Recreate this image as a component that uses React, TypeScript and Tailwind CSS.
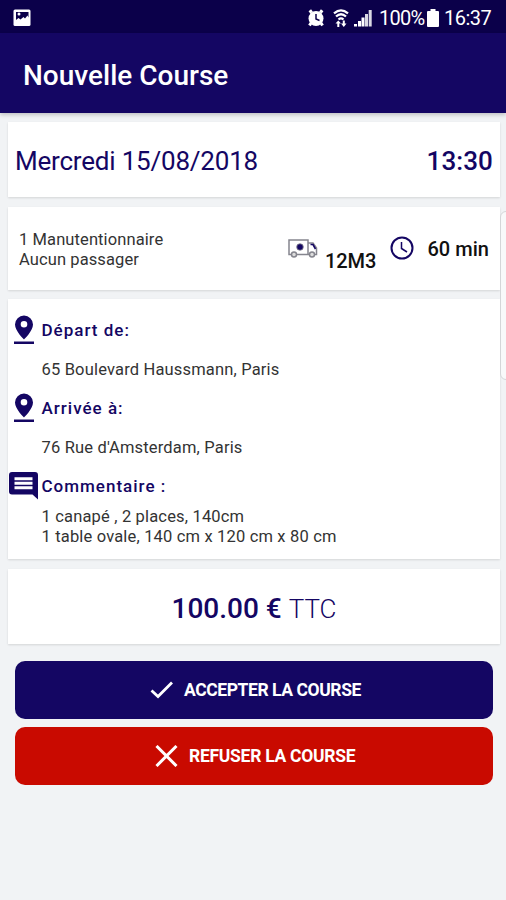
import React from 'react';

const NAVY = '#140663';

function StatusBar() {
  return (
    <div className="flex h-[33px] items-center bg-[#0b004a] pt-[3px] pl-[13px] text-white">
      <svg className="h-[18px] w-[18px]" viewBox="0 0 18 18">
        <rect x="0.5" y="0.5" width="17" height="16.5" rx="1.5" fill="#fff" />
        <path d="M3 3h12.500v5.500l-1-2-2.500 3-1.500-1.500-3 2.500-2-1.500-2.500 2z" fill="#0b004a" />
        <circle cx="6" cy="5" r="1.500" fill="#fff" />
      </svg>
      <svg className="ml-[276px] h-[18px] w-[18px]" viewBox="0 0 18 18">
        <path d="M2.500 3.500 5 1.500M15.500 3.500 13 1.500M4 14l-1.500 2.500M14 14l1.500 2.500" stroke="#fff" strokeWidth="3" />
        <circle cx="9" cy="9.500" r="7.500" fill="#fff" />
        <path d="M9 5v5l3.500 1.500" stroke="#0b004a" strokeWidth="1.500" fill="none" />
      </svg>
      <svg className="ml-[8px] h-[19px] w-[16px]" viewBox="0 0 16 19" fill="none" stroke="#fff" strokeWidth="2.300">
        <path d="M1 4.300Q8-1.500 15 4.300M3 7.500Q8 3 13 7.500M5.500 10.500Q8 8.300 10.500 10.500" />
        <path d="M2.500 14.500h5.500L5.300 11.500zM8 14.500h5.500l-2.700 3.500z" fill="#fff" stroke="none" />
        <path d="M5.300 13v5M10.800 11.500v4" strokeWidth="2" />
      </svg>
      <svg className="ml-[5px] h-[18px] w-[18px]" viewBox="0 0 18 18" fill="#fff">
        <path d="M0 15h3v2.500H0zM4 12h3v5.500H4zM7.500 8.500h3v9h-3z" />
        <path d="M11 5h3v12.500h-3zM14.700 1h3v16.500h-3z" opacity="0.85" />
      </svg>
      <span className="ml-[7px] w-[45px] text-[20px] leading-[20px] tracking-[-0.7px] whitespace-nowrap">100%</span>
      <svg className="ml-[3px] h-[18px] w-[12px]" viewBox="0 0 12 18" fill="#fff">
        <path d="M3.500 0h5v2H11q1 0 1 1v14q0 1-1 1H1q-1 0-1-1V3q0-1 1-1h2.500z" />
      </svg>
      <span className="ml-[5px] text-[20px] leading-[20px] tracking-[-0.5px]">16:37</span>
    </div>
  );
}

function PinIcon() {
  return (
    <svg className="ml-[6px] h-[30px] w-[20px] shrink-0" viewBox="0 0 20 30" fill={NAVY}>
      <path fillRule="evenodd" d="M10 0.500a9 9 0 0 1 9 9c0 6.500-9 15-9 15S1 16 1 9.500a9 9 0 0 1 9-9zm0 5.500a3.300 3.300 0 1 0 0 6.600 3.300 3.300 0 0 0 0-6.600z" />
      <path d="M0 26.500h20v2.500H0z" />
    </svg>
  );
}

function CommentIcon() {
  return (
    <svg className="ml-[1px] h-[28px] w-[29px] shrink-0" viewBox="0 0 29 28">
      <path d="M3 0h23q3 0 3 3v24.500l-5.500-5H3q-3 0-3-3V3q0-3 3-3z" fill={NAVY} />
      <path d="M5.500 6.800h18M5.500 11.300h18M5.500 15.800h18" stroke="#fff" strokeWidth="3" />
    </svg>
  );
}

function TruckIcon() {
  return (
    <svg className="h-[19px] w-[30px]" viewBox="0 0 30 19" fill="none" stroke="#85858e" strokeWidth="1.500">
      <path d="M3 15.500H1V1h19v14.500H9M20 4h5l3.500 5v6.500h-2M20 15.500h1" />
      <path d="M22.500 5.500h2.500l2.500 4.500" stroke={NAVY} strokeWidth="1.600" />
      <circle cx="6" cy="15.500" r="2.500" fill="#ddd" />
      <circle cx="24" cy="15.500" r="2.500" fill="#ddd" />
      <circle cx="12" cy="8" r="3.300" fill={NAVY} stroke="#85858e" strokeWidth="0.800" />
    </svg>
  );
}

function ClockIcon() {
  return (
    <svg className="h-[24px] w-[24px]" viewBox="0 0 24 24" fill="none" stroke={NAVY} strokeWidth="2">
      <circle cx="12" cy="12" r="10.500" />
      <path d="M11.500 6v6.500l5.500 3.500" strokeWidth="1.500" />
    </svg>
  );
}

interface StopProps {
  label: string;
  address: string;
}

function Stop({ label, address }: StopProps) {
  return (
    <div className="h-[78px]">
      <div className="flex h-[30px] items-center">
        <PinIcon />
        <h2 className="ml-[7.500px] text-[17px] leading-[20px] font-medium tracking-[1px] text-[#140663]">{label}</h2>
      </div>
      <p className="mt-[15px] ml-[33.500px] text-[16.500px] leading-[20px] tracking-[0.170px]">{address}</p>
    </div>
  );
}

export default function App() {
  return (
    <div className="relative h-[900px] w-[506px] overflow-hidden bg-[#f1f3f5] font-['Roboto',sans-serif] text-[#333333]">
      <StatusBar />
      <header className="flex h-[80px] items-center bg-[#140663] pt-[5px] pl-[23px] shadow-[0_2px_4px_rgba(0,0,0,0.2)]">
        <h1 className="text-[28px] leading-[34px] font-medium text-white">Nouvelle Course</h1>
      </header>

      <main className="mt-[9px] mr-[6px] ml-[8px] flex flex-col gap-[10px] whitespace-nowrap">
        <section className="flex h-[75px] items-center justify-between bg-white pt-[2px] pr-[7px] pl-[7px] text-[26px] leading-[32px] text-[#140663] shadow-[0_1px_2px_rgba(0,0,0,0.12)]">
          <span className="tracking-[-0.2px]">Mercredi 15/08/2018</span>
          <span className="font-medium tracking-[0.1px]">13:30</span>
        </section>

        <section className="flex h-[83px] bg-white shadow-[0_1px_2px_rgba(0,0,0,0.12)]">
          <div className="mt-[23px] ml-[11px] w-[269px] text-[16.500px] leading-[20px] tracking-[0.1px]">
            <p>1 Manutentionnaire</p>
            <p>Aucun passager</p>
          </div>
          <div className="mt-[32px] w-[30px]"><TruckIcon /></div>
          <span className="mt-[42px] ml-[7px] w-[64.500px] text-[20px] leading-[24px] font-medium tracking-[-0.1px] text-[#111111]">12M3</span>
          <div className="mt-[29px] w-[24px]"><ClockIcon /></div>
          <span className="mt-[30px] ml-[14px] text-[20px] leading-[24px] font-medium text-[#111111]">60 min</span>
        </section>

        <section className="-mt-px h-[260px] bg-white pt-[16px] shadow-[0_1px_2px_rgba(0,0,0,0.12)]">
          <Stop label="Départ de:" address="65 Boulevard Haussmann, Paris" />
          <Stop label="Arrivée à:" address="76 Rue d'Amsterdam, Paris" />
          <div className="flex h-[30px] items-center">
            <CommentIcon />
            <h2 className="ml-[3.500px] text-[17px] leading-[20px] font-medium tracking-[1px] text-[#140663]">Commentaire :</h2>
          </div>
          <div className="mt-[5.500px] ml-[33.500px] text-[16.500px] leading-[20px] tracking-[0.170px]">
            <p>1 canapé , 2 places, 140cm</p>
            <p>1 table ovale, 140 cm x 120 cm x 80 cm</p>
          </div>
        </section>

        <section className="flex h-[75px] items-center justify-center bg-white pt-[4px] text-[28px] leading-[34px] text-[#140663] shadow-[0_1px_2px_rgba(0,0,0,0.12)]">
          <span className="font-medium">100.00 €</span>
          <span className="ml-[7px] text-[26px] font-light">TTC</span>
        </section>

        <div className="mt-[6.500px] mr-[7.500px] ml-[6.500px] flex flex-col gap-[7.500px] text-[17.500px] leading-[20px] font-bold text-white">
          <button className="flex h-[58.500px] items-center rounded-[10px] bg-[#140663] pt-px pl-[135.500px]">
            <svg className="h-[18px] w-[24px]" viewBox="0 0 24 18" fill="none" stroke="#fff" strokeWidth="2.800">
              <path d="M1.500 9.500 8 15.500 22 1.500" />
            </svg>
            <span className="ml-[10px] tracking-[-0.420px]">ACCEPTER LA COURSE</span>
          </button>
          <button className="flex h-[58.500px] items-center rounded-[10px] bg-[#c90a00] pt-px pl-[140.500px]">
            <svg className="h-[22px] w-[23px]" viewBox="0 0 23 22" fill="none" stroke="#fff" strokeWidth="3">
              <path d="M1.500 1 21.500 21M21.500 1 1.500 21" />
            </svg>
            <span className="ml-[11px] tracking-[-0.280px]">REFUSER LA COURSE</span>
          </button>
        </div>
      </main>

      {/* Edge panel handle */}
      <div className="absolute top-[211px] left-[500px] h-[169px] w-[12px] rounded-[6px] border border-[#d4d6d8] bg-[#f8f9fa]" />
    </div>
  );
}
